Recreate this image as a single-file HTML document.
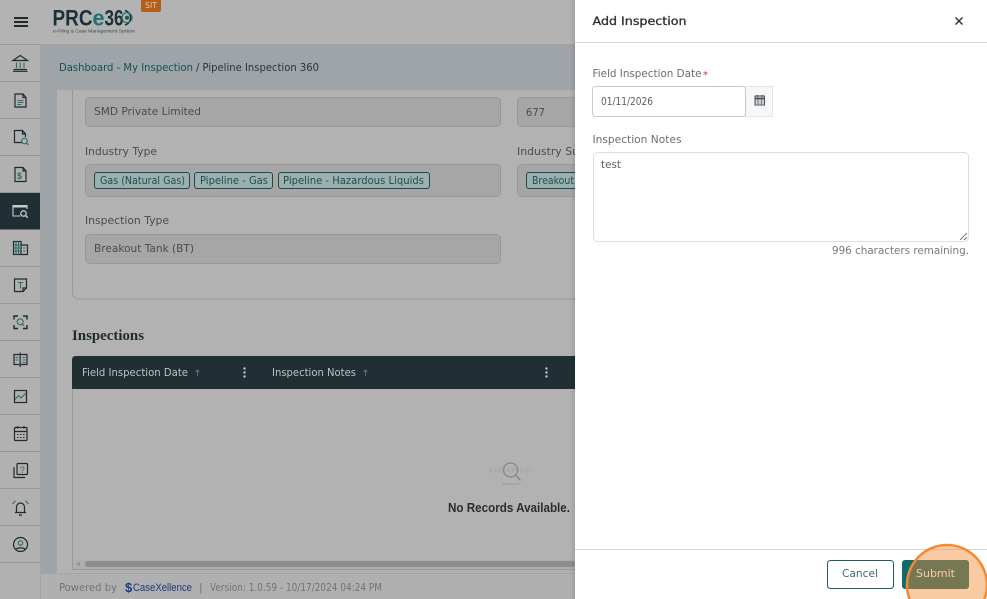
<!DOCTYPE html>
<html lang="en">
<head>
<meta charset="utf-8">
<title>Add Inspection</title>
<style>
html,body{margin:0;padding:0;width:987px;height:599px;overflow:hidden;background:#b2b2b2}
svg{display:block}
text{font-family:"DejaVu Sans","Liberation Sans",sans-serif;font-size:11px}
.l{fill:#4c4c4c}
.m{fill:#484c4d}
.t{fill:#1d4f50;font-size:10.5px}
.p{fill:#6f7477}
.i{fill:none;stroke:#20292c;stroke-width:1.2}
.g{fill:none;stroke:#2f6a6a;stroke-width:1.1}
</style>
</head>
<body>
<svg width="987" height="599" viewBox="0 0 987 599" xmlns="http://www.w3.org/2000/svg">
<!-- base -->
<rect width="987" height="599" fill="#b2b2b2"/>
<rect x="40" y="44" width="535" height="530" fill="#9ea4a8"/>
<rect x="57" y="90" width="518" height="484" fill="#b2b2b2"/>
<rect x="0" y="0" width="575" height="44" fill="#b3b3b3"/>
<rect x="0" y="44" width="40" height="555" fill="#b1b1b1"/>
<rect x="40" y="44" width="1" height="555" fill="#a2a4a5"/>
<rect x="41" y="574" width="534" height="25" fill="#b0b0b0"/>

<!-- hamburger -->
<path d="M14 18H28M14 22H28M14 26H28" stroke="#20292c" stroke-width="1.9" fill="none"/>

<!-- logo -->
<text x="52.500" y="25.500" textLength="40" lengthAdjust="spacingAndGlyphs" style="font-family:'Liberation Sans',sans-serif;font-size:22px;font-weight:700" fill="#1b3136">PRC</text>
<text x="92.500" y="25.500" textLength="12" lengthAdjust="spacingAndGlyphs" style="font-family:'Liberation Sans',sans-serif;font-size:22px;font-weight:700" fill="#1f7273">e</text>
<text x="104.500" y="25.500" textLength="19" lengthAdjust="spacingAndGlyphs" style="font-family:'Liberation Sans',sans-serif;font-size:22px;font-weight:700" fill="#1b3136">36</text>
<path d="M125 10.500A7.500 7.500 0 0 1 125 25" fill="none" stroke="#1b3136" stroke-width="1.500"/>
<circle cx="127" cy="17.700" r="5" fill="none" stroke="#1f7273" stroke-width="1.200"/>
<circle cx="127" cy="17.700" r="2" fill="#2c4f52"/>
<text x="53" y="32.500" textLength="82" lengthAdjust="spacingAndGlyphs" style="font-size:4.800px;font-family:'Liberation Sans',sans-serif" fill="#35484c">e-Filing &amp; Case Management System</text>
<path d="M141 0H161V10a2 2 0 0 1-2 2H143a2 2 0 0 1-2-2Z" fill="#b35f1a"/>
<text x="145" y="8" textLength="12" lengthAdjust="spacingAndGlyphs" style="font-size:8px" fill="#e3cdb8">SIT</text>

<!-- sidebar lines -->
<path d="M0 44.500H40M0 81.500H40M0 118.500H40M0 155.500H40M0 192.500H40M0 266.500H40M0 303.500H40M0 340.500H40M0 377.500H40M0 414.500H40M0 451.500H40M0 488.500H40M0 525.500H40M0 562.500H40" stroke="#979a9b" stroke-width="1"/>
<rect x="0" y="193" width="40" height="36.500" fill="#1f2f33"/>

<!-- 1 bank -->
<g class="i"><path d="M13 60.500H27.500L20.200 55.500Z"/><path class="g" d="M16.500 62.500V68M20.200 62.500V68M24 62.500V68"/><path d="M13.500 69.500H27M13 71.300H27.500"/></g>
<!-- 2 doc -->
<g class="i"><path d="M15 94H23L26 97.500V107H15Z"/><path d="M23 94V97.500H26"/><path class="g" d="M17.500 100.500H23.500M17.500 102.500H23.500M17.500 104.500H21.500"/></g>
<!-- 3 doc search -->
<g class="i"><path d="M22 142.500H14.500V130.500H22.500L25.500 134V137"/><path d="M22.500 130.500V134H25.500"/><circle class="g" cx="24.500" cy="141" r="2.800" stroke-width="1.300"/><path class="g" d="M26.500 143L28.500 145" stroke-width="1.400"/></g>
<!-- 4 doc dollar -->
<g class="i"><path d="M15 167.500H23L26 171V181.500H15Z"/><path d="M23 167.500V171H26"/><text x="17" y="179" style="font-size:9px;font-weight:700;stroke:none;fill:#2f6a6a;font-family:'Liberation Sans',sans-serif">$</text></g>
<!-- 5 active -->
<g fill="none" stroke="#c9cbcb" stroke-width="1.100"><path d="M20.500 216H13V205.500H27V209"/><rect x="13" y="205" width="14" height="2.500" fill="#c9cbcb" stroke="none"/><circle cx="23.500" cy="213.500" r="2.700" stroke-width="1.300"/><path d="M25.500 215.500L27.800 217.800" stroke-width="1.400"/></g>
<!-- 6 building -->
<g><rect x="13.500" y="241.500" width="7.500" height="13" class="i"/><path class="i" d="M21 245H27.500V254.500H21"/><path class="g" d="M13.500 245H21M13.500 248H21M13.500 251H21M16 241.500V254.500M18.500 241.500V254.500M23 248H25.500M23 251H25.500" stroke-width=".9"/></g>
<!-- 7 T note -->
<g class="i"><path d="M14.500 279H26.500V288L23 291.500H14.500Z"/><path d="M26.500 288H23V291.500"/><path class="g" d="M17.800 282.500H23.300M20.500 282.500V288.500" stroke-width="1.400"/></g>
<!-- 8 scan -->
<g class="i"><path d="M14 319.500V316H18M23 316H27V319.500M27 325V328.500H23M18 328.500H14V325" stroke-width="1.400"/><circle class="g" cx="20.200" cy="321.800" r="3"/><path class="g" d="M22.300 324L24 325.800"/></g>
<!-- 9 book -->
<g class="i"><path d="M19.500 354.500H14V364.500H19.500M21 354.500H27V364.500H21"/><path d="M20.200 352.500V367"/><path class="g" d="M15.500 357.500H18.500M15.500 360H18.500M22.500 357.500H25.500M22.500 360H25.500M22.500 362.500H25.500" stroke-width=".9"/></g>
<!-- 10 chart -->
<g class="i"><rect x="14.500" y="390.500" width="12" height="12"/><path class="g" d="M15 399.500L18.500 395.500L21 398L26 393" stroke-width="1.200"/></g>
<!-- 11 calendar -->
<g class="i"><rect x="14.500" y="427.500" width="12.500" height="13" rx="1"/><path d="M14.500 431.500H27M17.500 426V428.500M24 426V428.500"/><path d="M17 434.500H18.500M20 434.500H21.500M23 434.500H24.500M17 437.500H18.500M20 437.500H21.500M23 437.500H24.500" stroke-width="1"/></g>
<!-- 12 question -->
<g class="i"><rect x="17" y="463.500" width="10.500" height="11" rx="1"/><path d="M14 467V477.500H25"/><text x="19.800" y="473" style="font-size:9px;stroke:none;fill:#2f6a6a;font-family:'Liberation Sans',sans-serif">?</text></g>
<!-- 13 bell -->
<g class="i"><path d="M15 512.500H26M16.500 512.500V507a4 4 0 0 1 8 0V512.500"/><path d="M19 515H22" stroke-width="1.400"/><path class="g" d="M13 504C13.500 502.500 14.500 501.500 15.500 501M28 504C27.500 502.500 26.500 501.500 25.500 501"/></g>
<!-- 14 user -->
<g class="i"><circle cx="20.500" cy="544.500" r="7"/><circle class="g" cx="20.500" cy="543" r="2.200"/><path d="M15.500 549.500C17 547.300 24 547.300 25.500 549.500"/></g>

<!-- breadcrumb -->
<text x="59" y="71" textLength="134" lengthAdjust="spacingAndGlyphs" fill="#165052">Dashboard - My Inspection</text>
<text x="196" y="71" textLength="123" lengthAdjust="spacingAndGlyphs" fill="#2a3436">/ Pipeline Inspection 360</text>

<!-- filter card -->
<path d="M72.500 90V293a6 6 0 0 0 6 6H575" fill="none" stroke="#979a9b"/>
<rect x="85.500" y="97.500" width="415" height="29" rx="4" fill="#a6a6a6" stroke="#979999"/>
<text x="94" y="115" textLength="107" lengthAdjust="spacingAndGlyphs" class="m">SMD Private Limited</text>
<rect x="517.500" y="97.500" width="70" height="29" rx="4" fill="#a6a6a6" stroke="#979999"/>
<text x="526" y="116" textLength="19" lengthAdjust="spacingAndGlyphs" class="m">677</text>

<text x="85" y="155" textLength="72" lengthAdjust="spacingAndGlyphs" class="l">Industry Type</text>
<text x="517" y="155" textLength="62" lengthAdjust="spacingAndGlyphs" class="l">Industry Su</text>
<rect x="85.500" y="164.500" width="415" height="32" rx="4" fill="#a6a6a6" stroke="#979999"/>
<rect x="517.500" y="164.500" width="70" height="32" rx="4" fill="#a6a6a6" stroke="#979999"/>

<g fill="#9bb0af" stroke="#184c4d">
<rect x="94.500" y="172.500" width="95" height="16" rx="2.500"/>
<rect x="194.500" y="172.500" width="78" height="16" rx="2.500"/>
<rect x="278.500" y="172.500" width="151" height="16" rx="2.500"/>
<rect x="526.500" y="172.500" width="60" height="16" rx="2.500"/>
</g>
<text x="100" y="184" textLength="85" lengthAdjust="spacingAndGlyphs" class="t">Gas (Natural Gas)</text>
<text x="200" y="184" textLength="68" lengthAdjust="spacingAndGlyphs" class="t">Pipeline - Gas</text>
<text x="283" y="184" textLength="141" lengthAdjust="spacingAndGlyphs" class="t">Pipeline - Hazardous Liquids</text>
<text x="532" y="184" textLength="42" lengthAdjust="spacingAndGlyphs" class="t">Breakout</text>

<text x="85" y="224" textLength="84" lengthAdjust="spacingAndGlyphs" class="l">Inspection Type</text>
<rect x="85.500" y="234.500" width="415" height="29" rx="4" fill="#a6a6a6" stroke="#979999"/>
<text x="94" y="252" textLength="100" lengthAdjust="spacingAndGlyphs" class="m">Breakout Tank (BT)</text>

<!-- inspections -->
<text x="72" y="340" textLength="72" lengthAdjust="spacingAndGlyphs" style="font-family:'Liberation Serif',serif;font-weight:700;font-size:15px" fill="#1f2b2e">Inspections</text>
<rect x="72.500" y="356.500" width="510" height="213" fill="none" stroke="#979a9b"/>
<path d="M72 360a4 4 0 0 1 4-4H575V389H72Z" fill="#1f2f33"/>
<text x="82" y="376" textLength="106" lengthAdjust="spacingAndGlyphs" fill="#bcc3c3">Field Inspection Date</text>
<text x="272" y="376" textLength="84" lengthAdjust="spacingAndGlyphs" fill="#bcc3c3">Inspection Notes</text>
<path d="M197.500 376V370M195.500 372L197.500 370L199.500 372M365.500 376V370M363.500 372L365.500 370L367.500 372" stroke="#5d6b6d" fill="none" stroke-width="1"/>
<g fill="#c0c5c5"><circle cx="244.500" cy="368.500" r="1.200"/><circle cx="244.500" cy="372.500" r="1.200"/><circle cx="244.500" cy="376.500" r="1.200"/><circle cx="546.500" cy="368.500" r="1.200"/><circle cx="546.500" cy="372.500" r="1.200"/><circle cx="546.500" cy="376.500" r="1.200"/></g>

<!-- empty state -->
<path d="M489 470H531" stroke="#aaaaaa" stroke-width="5" stroke-dasharray="3 1.500"/>
<circle cx="510.500" cy="470" r="7" fill="none" stroke="#7f8a8b" stroke-width="1.200"/>
<path d="M515.500 475L520.500 480.500" stroke="#7f8a8b" stroke-width="1.500"/>
<path d="M502 484H520" stroke="#979b9c" stroke-width="1"/>
<text x="448" y="512" textLength="122" lengthAdjust="spacingAndGlyphs" style="font-family:'Liberation Sans',sans-serif;font-size:13px;font-weight:700" fill="#2b2e30">No Records Available.</text>

<!-- scrollbar -->
<rect x="73" y="560" width="502" height="9" fill="#aeaeae"/>
<rect x="85" y="561" width="490" height="6" rx="3" fill="#8d8d8d"/>
<path d="M80 561.500V566.500L76 564Z" fill="#969696"/>

<!-- footer -->
<rect x="41" y="573" width="534" height="1" fill="#a3a5a6"/>
<text x="59" y="591" textLength="58" lengthAdjust="spacingAndGlyphs" class="p">Powered by</text>
<text x="125" y="592" style="font-family:'Liberation Sans',sans-serif;font-size:13px;font-weight:700" fill="#1c3b78">$</text>
<text x="133" y="591" textLength="59" lengthAdjust="spacingAndGlyphs" style="font-family:'Liberation Sans',sans-serif;font-size:11px" fill="#1c3b78">CaseXellence</text>
<text x="199" y="591" class="p">|</text>
<text x="210" y="591" textLength="172" lengthAdjust="spacingAndGlyphs" class="p">Version: 1.0.59 - 10/17/2024 04:24 PM</text>

<!-- panel shadow -->
<defs>
<linearGradient id="sh" x1="0" x2="1" y1="0" y2="0"><stop offset="0" stop-color="#000" stop-opacity="0"/><stop offset="1" stop-color="#000" stop-opacity=".1"/></linearGradient>
<clipPath id="panelclip"><rect x="575" y="0" width="412" height="599"/></clipPath>
</defs>
<rect x="570" y="0" width="5" height="599" fill="url(#sh)"/>

<!-- panel -->
<rect x="575" y="0" width="412" height="599" fill="#fff"/>
<text x="592.500" y="25" textLength="94" lengthAdjust="spacingAndGlyphs" stroke="#2c2f30" stroke-width=".3" style="font-size:11.500px" fill="#2c2f30">Add Inspection</text>
<path d="M955.500 17.500L962.500 24.500M962.500 17.500L955.500 24.500" stroke="#33383a" stroke-width="1.500"/>
<rect x="575" y="42" width="412" height="1" fill="#d4d6d6"/>

<text x="592.500" y="77" textLength="109" lengthAdjust="spacingAndGlyphs" fill="#6a6d6f">Field Inspection Date</text>
<text x="703" y="78" style="font-size:10px" fill="#d2333f">*</text>
<rect x="745.500" y="86.500" width="27" height="30" fill="#f6f7f8" stroke="#e3e5e6"/>
<rect x="592.500" y="86.500" width="153" height="30" rx="3" fill="#fff" stroke="#c7cbcc"/>
<text x="601" y="105" textLength="52" lengthAdjust="spacingAndGlyphs" fill="#5d6163">01/11/2026</text>
<g stroke="#4a4f51" fill="none"><rect x="755" y="96" width="9.500" height="9" stroke-width="1"/><path d="M755 98.500H764.500" stroke-width="2"/><path d="M757.500 95V97M762 95V97" stroke-width="1.200"/><path d="M755 101H764.500M755 103H764.500M758 99V105M761.500 99V105" stroke-width=".6"/></g>

<text x="592.500" y="143" textLength="89" lengthAdjust="spacingAndGlyphs" fill="#6a6d6f">Inspection Notes</text>
<rect x="593.500" y="152.500" width="375" height="89" rx="4" fill="#fff" stroke="#dcdfe0"/>
<text x="601" y="168" textLength="20" lengthAdjust="spacingAndGlyphs" fill="#5d6163">test</text>
<path d="M960 240L967 233M964 240L967 237" stroke="#555" stroke-width=".8"/>
<text x="969" y="254" text-anchor="end" textLength="137" lengthAdjust="spacingAndGlyphs" fill="#777b7d">996 characters remaining.</text>

<rect x="575" y="549" width="412" height="1" fill="#d4d6d6"/>
<rect x="827.500" y="560.500" width="66" height="28" rx="3" fill="#fff" stroke="#1b5d60"/>
<text x="842" y="577" textLength="36" lengthAdjust="spacingAndGlyphs" fill="#3f6a6c">Cancel</text>
<rect x="902" y="560" width="67" height="29" rx="3" fill="#0e6b6e"/>
<text x="916" y="577" textLength="39" lengthAdjust="spacingAndGlyphs" fill="#ffffff">Submit</text>
<g clip-path="url(#panelclip)">
<circle cx="947" cy="585" r="40" fill="#f58a33" fill-opacity=".45" stroke="#f58a33" stroke-width="2.500"/>
</g>
</svg>
</body>
</html>
